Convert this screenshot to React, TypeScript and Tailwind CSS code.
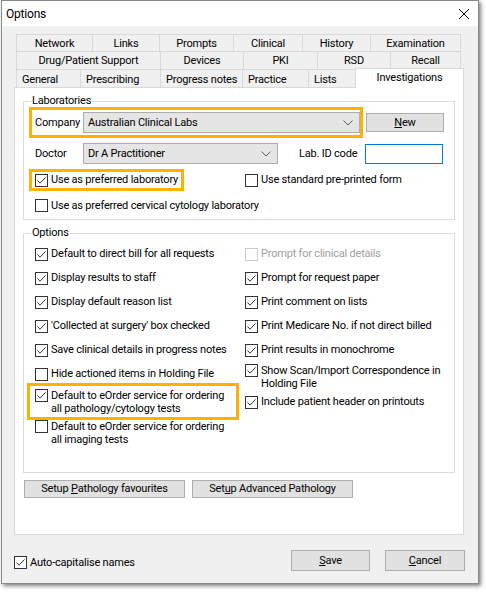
import type { ReactNode } from "react";

type Tab = { label: string; w: string };

const row1: Tab[] = [
  { label: "Network", w: "w-[76px]" },
  { label: "Links", w: "w-[67px]" },
  { label: "Prompts", w: "w-[74px]" },
  { label: "Clinical", w: "w-[69px]" },
  { label: "History", w: "w-[68px]" },
  { label: "Examination", w: "w-[91px]" },
];

const row2: Tab[] = [
  { label: "Drug/Patient Support", w: "w-[144px]" },
  { label: "Devices", w: "w-[83px]" },
  { label: "PKI", w: "w-[74px]" },
  { label: "RSD", w: "w-[73px]" },
  { label: "Recall", w: "w-[71px]" },
];

const row3: Tab[] = [
  { label: "General", w: "w-[64px]" },
  { label: "Prescribing", w: "w-[80px]" },
  { label: "Progress notes", w: "w-[82px]" },
  { label: "Practice", w: "w-[66px]" },
  { label: "Lists", w: "w-[47px]" },
];

function Box({ checked = false, disabled = false }: { checked?: boolean; disabled?: boolean }) {
  return (
    <span
      className={`flex h-[13px] w-[13px] shrink-0 items-center justify-center border bg-white ${
        disabled ? "border-[#cccccc]" : "border-[#333333]"
      }`}
    >
      {checked && (
        <svg width="11" height="11" viewBox="0 0 11 11">
          <path d="M1.5 5.5 L4 8.2 L9.6 2.4" fill="none" stroke="#333" strokeWidth="1" />
        </svg>
      )}
    </span>
  );
}

// single line option row, 24px tall
function Opt({ label, checked = false, disabled = false }: { label: string; checked?: boolean; disabled?: boolean }) {
  return (
    <div className="flex h-[24px] items-center gap-[3px] whitespace-nowrap">
      <Box checked={checked} disabled={disabled} />
      <span className={disabled ? "text-[#a0a0a0]" : ""}>{label}</span>
    </div>
  );
}

function Chevron() {
  return (
    <svg width="10" height="6" viewBox="0 0 10 6">
      <path d="M0.5 0.5 L5 5 L9.5 0.5" fill="none" stroke="#606060" strokeWidth="1" />
    </svg>
  );
}

function Combo({ value, w }: { value: string; w: string }) {
  return (
    <div className={`flex h-[21px] ${w} items-center justify-between border border-[#acacac] bg-[#e5e5e5] pl-[4px] pr-[6px]`}>
      <span>{value}</span>
      <Chevron />
    </div>
  );
}

function Btn({ children, w, h }: { children: ReactNode; w: string; h: string }) {
  return (
    <button className={`flex ${w} ${h} items-center justify-center border border-[#adadad] bg-[#e1e1e1] text-black`}>
      {children}
    </button>
  );
}

export default function App() {
  return (
    <div className="h-[592px] w-[486px] whitespace-nowrap bg-white font-[Roboto,sans-serif] text-[11px] leading-[14px] tracking-[-0.2px] text-black">
      <div className="ml-[1px] flex h-[584px] w-[478px] flex-col border border-[#888888] bg-[#f0f0f0] shadow-[2px_2px_4px_rgba(0,0,0,0.5)]">
        {/* title bar */}
        <div className="flex h-[25px] items-center justify-between bg-white pl-[4px] pr-[9px]">
          <span className="text-[12px]">Options</span>
          <svg width="10" height="10" viewBox="0 0 10 10">
            <path d="M0 0 L10 10 M10 0 L0 10" stroke="#000" strokeWidth="1" />
          </svg>
        </div>

        <div className="flex flex-col pl-[12px] pt-[8px]">
          {/* tabs */}
          <div className="ml-[2px] flex h-[17px]">
            {row1.map((t, i) => (
              <div
                key={t.label}
                className={`flex ${t.w} items-center justify-center border-l border-t border-[#d9d9d9] pt-[1px] ${
                  i === row1.length - 1 ? "border-r" : ""
                }`}
              >
                {t.label}
              </div>
            ))}
          </div>
          <div className="ml-[2px] flex h-[18px]">
            {row2.map((t, i) => (
              <div
                key={t.label}
                className={`flex ${t.w} items-center justify-center border-l border-t border-[#d9d9d9] pt-[1px] ${
                  i === row2.length - 1 ? "border-r" : ""
                }`}
              >
                {t.label}
              </div>
            ))}
          </div>
          <div className="ml-[2px] flex h-[18px] items-end">
            {row3.map((t) => (
              <div key={t.label} className={`flex h-[18px] ${t.w} items-center border-l border-t border-[#d9d9d9] pl-[5px] pt-[2px]`}>
                {t.label}
              </div>
            ))}
            <div className="relative z-10 -mb-[1px] flex h-[20px] w-[109px] items-center justify-center border-x border-t border-[#d9d9d9] bg-white pb-[2px]">
              Investigations
            </div>
          </div>

          {/* panel */}
          <div className="h-[448px] w-[450px] border border-[#d9d9d9] bg-white px-[8px]">
            <fieldset className="mt-[6px] w-[432px] border border-[#dcdcdc] pb-[6px]">
              <legend className="ml-[7px] px-[1px] leading-[14px]">Laboratories</legend>

              <div className="ml-[8px] mt-[2px] flex items-center">
                <div className="flex h-[25px] w-[328px] items-center pl-[3px] outline-3 outline-solid outline-[#ffb100]">
                  <span className="w-[48px]">Company</span>
                  <Combo value="Australian Clinical Labs" w="w-[277px]" />
                </div>
                <div className="ml-[6px]">
                  <Btn w="w-[78px]" h="h-[19px]">
                    <span className="underline">N</span>ew
                  </Btn>
                </div>
              </div>

              <div className="ml-[11px] mt-[8px] flex h-[21px] items-center">
                <span className="w-[48px]">Doctor</span>
                <Combo value="Dr A Practitioner" w="w-[195px]" />
                <span className="ml-[21px] w-[66px]">Lab. ID code</span>
                <div className="h-[20px] w-[78px] border border-[#0078d7] bg-white" />
              </div>

              <div className="ml-[8px] mt-[8px] flex items-center">
                <div className="flex h-[16px] w-[149px] items-center gap-[3px] pl-[3px] outline-3 outline-solid outline-[#ffb100]">
                  <Box checked />
                  <span>Use as preferred laboratory</span>
                </div>
                <div className="ml-[64px] flex items-center gap-[3px]">
                  <Box />
                  <span>Use standard pre-printed form</span>
                </div>
              </div>

              <div className="ml-[11px] mt-[10px] flex h-[15px] items-center gap-[3px]">
                <Box />
                <span>Use as preferred cervical cytology laboratory</span>
              </div>
            </fieldset>

            <fieldset className="mt-[6px] h-[247px] w-[432px] border border-[#dcdcdc]">
              <legend className="ml-[7px] px-[1px] leading-[14px]">Options</legend>
              <div className="flex">
                <div className="ml-[6px] mt-[2px] flex w-[206px] flex-col">
                  <div className="pl-[5px]">
                    <Opt label="Default to direct bill for all requests" checked />
                    <Opt label="Display results to staff" checked />
                    <Opt label="Display default reason list" checked />
                    <Opt label="'Collected at surgery' box checked" checked />
                    <Opt label="Save clinical details in progress notes" checked />
                    <Opt label="Hide actioned items in Holding File" />
                  </div>
                  <div className="flex h-[31px] items-start gap-[3px] pl-[5px] pt-[3px] leading-[13px] outline-3 outline-solid outline-[#ffb100]">
                    <Box checked />
                    <span>
                      Default to eOrder service for ordering
                      <br />
                      all pathology/cytology tests
                    </span>
                  </div>
                  <div className="mt-[3px] flex items-start gap-[3px] pl-[5px] leading-[13px]">
                    <Box />
                    <span>
                      Default to eOrder service for ordering
                      <br />
                      all imaging tests
                    </span>
                  </div>
                </div>

                <div className="ml-[9px] mt-[2px] flex flex-col">
                  <Opt label="Prompt for clinical details" disabled />
                  <Opt label="Prompt for request paper" checked />
                  <Opt label="Print comment on lists" checked />
                  <Opt label="Print Medicare No. if not direct billed" checked />
                  <Opt label="Print results in monochrome" checked />
                  <div className="mt-[2px] flex items-start gap-[3px] leading-[13px]">
                    <Box checked />
                    <span>
                      Show Scan/Import Correspondence in
                      <br />
                      Holding File
                    </span>
                  </div>
                  <Opt label="Include patient header on printouts" checked />
                </div>
              </div>
            </fieldset>

            <div className="ml-[1px] mt-[7px] flex gap-[7px]">
              <Btn w="w-[161px]" h="h-[18px]">
                Setup&nbsp;<span className="underline">P</span>athology favourites
              </Btn>
              <Btn w="w-[161px]" h="h-[18px]">
                Set<span className="underline">u</span>p Advanced Pathology
              </Btn>
            </div>
          </div>

          {/* footer */}
          <div className="mt-[15px] flex h-[21px] items-center pr-[13px]">
            <div className="mt-[4px] flex items-center gap-[3px]">
              <Box checked />
              <span>Auto-capitalise names</span>
            </div>
            <div className="ml-auto">
              <Btn w="w-[79px]" h="h-[21px]">
                <span className="underline">S</span>ave
              </Btn>
            </div>
            <div className="ml-[15px]">
              <Btn w="w-[80px]" h="h-[21px]">
                <span className="underline">C</span>ancel
              </Btn>
            </div>
          </div>
        </div>
      </div>
    </div>
  );
}
